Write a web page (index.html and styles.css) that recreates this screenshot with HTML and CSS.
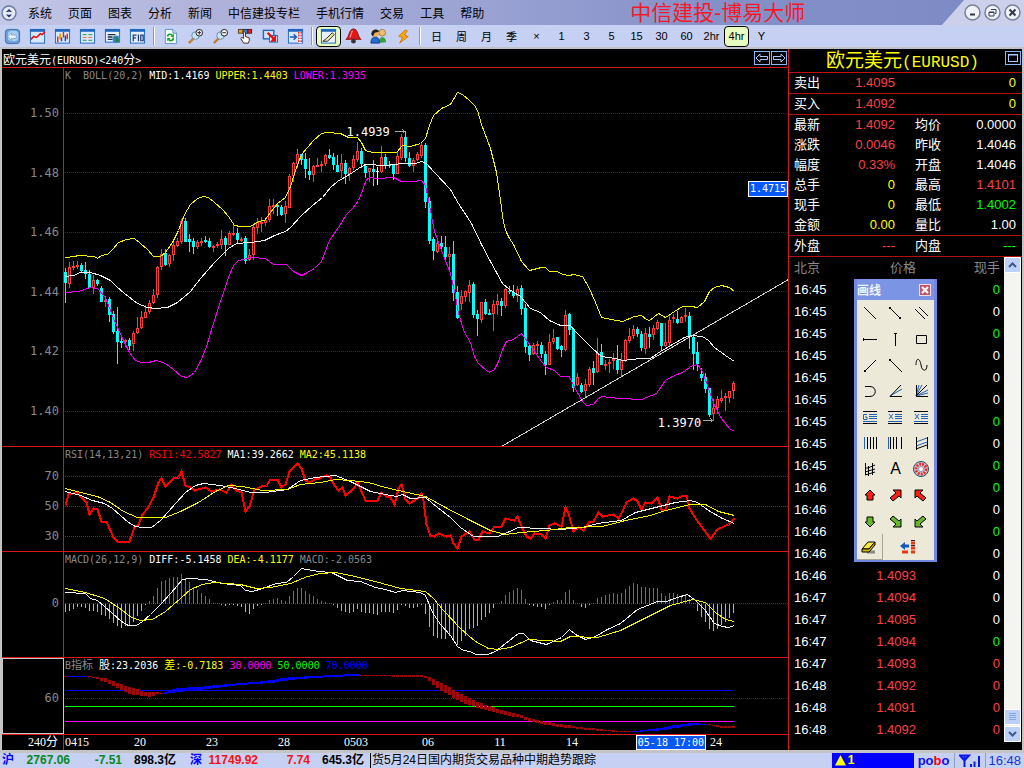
FILE: index.html
```html
<!DOCTYPE html>
<html lang="zh-CN">
<head>
<meta charset="utf-8">
<title>中信建投-博易大师</title>
<link rel="stylesheet" href="styles.css">
</head>
<body>
<header class="menubar">
  <svg class="app-icon" width="16" height="16" viewBox="0 0 16 16"><circle cx="8" cy="8" r="7" fill="#e4e8f4" stroke="#6878a0" stroke-width="1.4"/><path d="M5 7l3-3 3 3zM5 9.500l3 3 3-3z" fill="#203060"/><circle cx="8" cy="8.200" r="1.600" fill="#e4e8f4"/></svg>
  <nav class="menu">
    <button>系统</button><button>页面</button><button>图表</button><button>分析</button><button>新闻</button><button>中信建投专栏</button><button>手机行情</button><button>交易</button><button>工具</button><button>帮助</button>
  </nav>
  <h1 class="app-title">中信建投-博易大师</h1>
  <div class="window-buttons">
    <button aria-label="最小化"><svg width="17" height="17" viewBox="0 0 17 17"><circle cx="8.500" cy="8.500" r="7.500" fill="#f0f2f8" stroke="#788098" stroke-width="1.500"/><path d="M6 10.500h5" stroke="#303848" stroke-width="2"/></svg></button>
    <button aria-label="还原"><svg width="17" height="17" viewBox="0 0 17 17"><circle cx="8.500" cy="8.500" r="7.500" fill="#f0f2f8" stroke="#788098" stroke-width="1.500"/><path d="M7 5.500h5v4h-1M5 8h5v4H5zM5 8.500h5" fill="none" stroke="#304058"/></svg></button>
    <button aria-label="关闭"><svg width="17" height="17" viewBox="0 0 17 17"><circle cx="8.500" cy="8.500" r="7.500" fill="#f0f2f8" stroke="#788098" stroke-width="1.500"/><path d="M5.500 5.500l6 6M11.500 5.500l-6 6" stroke="#303848" stroke-width="2"/></svg></button>
  </div>
</header>

<div class="toolbar">
  <button aria-label="返回"><svg width="18" height="18" viewBox="0 0 18 18"><rect x="1.500" y="1.500" width="15" height="15" rx="3" fill="#6c9cd8" stroke="#4070a8"/><rect x="4" y="3" width="11" height="11" rx="4" fill="#a8cef0"/><path d="M4 9l4-4v2.500h5v3.500H8v2.500z" fill="#e8f4ff" stroke="#5888b8" stroke-width=".6"/></svg></button>
  <button aria-label="分时图"><svg width="18" height="18" viewBox="0 0 18 18"><rect x="1.500" y="2" width="15" height="14" fill="#d8e8fc" stroke="#2068c0"/><path d="M1 2.500h16" stroke="#2068c0" stroke-width="3"/><path d="M2 12l3-3 3 1 4-4 2 1 3-3" fill="none" stroke="#e01010" stroke-width="1.700"/></svg></button>
  <button aria-label="K线图"><svg width="18" height="18" viewBox="0 0 18 18"><rect x="1.500" y="2" width="15" height="14" fill="#d8e8fc" stroke="#2068c0"/><path d="M1 2.500h16" stroke="#2068c0" stroke-width="3"/><path d="M4 9v6M10 4v6M14 6v6" stroke="#e02010" stroke-width="1.500"/><path d="M6.500 6v6" stroke="#e0a000" stroke-width="2"/><path d="M12 8v6M8 10v4" stroke="#1048c0" stroke-width="1.500"/></svg></button>
  <button aria-label="报价"><svg width="18" height="18" viewBox="0 0 18 18"><rect x="1.500" y="2" width="15" height="14" fill="#dce8fc" stroke="#2068c0"/><path d="M1 2.500h16" stroke="#2068c0" stroke-width="3"/><path d="M4 7h4M10 7h4M4 13h4M10 13h4" stroke="#209040"/><path d="M4 10h4M10 10h4" stroke="#d87020"/></svg></button>
  <button aria-label="资讯"><svg width="18" height="18" viewBox="0 0 18 18"><rect x="1.500" y="2" width="15" height="13" fill="#e4eefc" stroke="#2068c0"/><path d="M1 2.500h16" stroke="#2068c0" stroke-width="3"/><path d="M4 7h8M4 9.500h5M4 12h5" stroke="#203050" stroke-width="1.500"/><circle cx="13" cy="12" r="4" fill="#3888c8"/><path d="M11 10l3 1-1 3 3-1" fill="none" stroke="#208030" stroke-width="1.500"/></svg></button>
  <button aria-label="F10"><svg width="18" height="18" viewBox="0 0 18 18"><rect x="1.500" y="2" width="15" height="14" fill="#e4eefc" stroke="#2068c0"/><path d="M1 2.500h16" stroke="#2068c0" stroke-width="3"/><path d="M4.500 14V7.500H8M4.500 10.500H7.500M10 7v7M12.500 7.500h2.500v6h-2.500z" fill="none" stroke="#203878" stroke-width="1.300"/></svg></button>
  <span class="sep"></span>
  <button aria-label="刷新"><svg width="18" height="18" viewBox="0 0 18 18"><path d="M3.500 1.500h8l4 4v11h-12z" fill="#f4fff4" stroke="#5890c8"/><path d="M11.500 1.500v4h4" fill="#c8dcf4" stroke="#5890c8"/><path d="M6 9c0-3 4-3 5-1M12 10c0 4-4 4-5 2" fill="none" stroke="#18a028" stroke-width="1.800"/><path d="M12.500 6v3.500H9zM5.500 14v-3.500H9z" fill="#18a028"/></svg></button>
  <button aria-label="放大"><svg width="18" height="18" viewBox="0 0 18 18"><path d="M2 16l5-5" stroke="#c08030" stroke-width="2.500"/><circle cx="9" cy="8" r="4" fill="#c8e4f8" stroke="#6888a8"/><circle cx="13" cy="5" r="3.500" fill="#f8f8ff" stroke="#181818"/><path d="M11 5h4M13 3v4" stroke="#181818"/></svg></button>
  <button aria-label="缩小"><svg width="18" height="18" viewBox="0 0 18 18"><path d="M2 16l5-5" stroke="#c08030" stroke-width="2.500"/><circle cx="9" cy="8" r="4" fill="#c8e4f8" stroke="#6888a8"/><circle cx="13" cy="5" r="3.500" fill="#f8f8ff" stroke="#181818"/><path d="M11 5h4" stroke="#181818"/></svg></button>
  <button aria-label="选择"><svg width="18" height="18" viewBox="0 0 18 18"><rect x="1.500" y="1.500" width="5" height="4" fill="#e8a020" stroke="#604020"/><rect x="6.500" y="1.500" width="5" height="4" fill="#3878d0" stroke="#203060"/><rect x="11.500" y="1.500" width="4" height="4" fill="#e02018" stroke="#601818"/><path d="M7 16l-3-5 1-1 2 1V5l1-1 1 1v4l4 1.500v3L12 16z" fill="#fff" stroke="#402818"/></svg></button>
  <button aria-label="转到"><svg width="18" height="18" viewBox="0 0 18 18"><rect x="1.500" y="2.500" width="11" height="9" fill="#d4e4fc" stroke="#2068c0" stroke-width="1.500"/><rect x="8" y="8" width="8.500" height="7" fill="#e8f0fc" stroke="#2068c0"/><path d="M6 5l6 6" stroke="#e01010" stroke-width="2.500"/><path d="M15 14.500H8.500L15 7z" fill="#e01010"/></svg></button>
  <button aria-label="侧栏"><svg width="18" height="18" viewBox="0 0 18 18"><rect x="1.500" y="2" width="15" height="14" fill="#dce8fc" stroke="#2068c0"/><path d="M1 2.500h16" stroke="#2068c0" stroke-width="3"/><rect x="12" y="4" width="4" height="12" fill="#fff"/><path d="M12.500 4v12M15 4v12" stroke="#e02020" stroke-width="1.500" stroke-dasharray="2 1"/><path d="M3 9.500h7M7 6.500l3 3-3 3" fill="none" stroke="#1858c0" stroke-width="1.500"/></svg></button>
  <span class="sep"></span>
  <button class="on" aria-label="画线"><svg width="18" height="18" viewBox="0 0 18 18"><rect x="1.500" y="2" width="15" height="14" fill="#e8f0fc" stroke="#2068c0"/><path d="M1 2.500h16" stroke="#2068c0" stroke-width="3"/><path d="M3 14h5l7-7-2-2-6 6z" fill="#f0e8b0" stroke="#202020"/></svg></button>
  <button aria-label="预警"><svg width="18" height="18" viewBox="0 0 18 18"><path d="M9 1c5 0 4 8 8 11H1C5 9 4 1 9 1z" fill="#e01818" stroke="#901010"/><path d="M8 3c-2 2-1 5-3 7" fill="none" stroke="#f88080" stroke-width="1.500"/><circle cx="9" cy="14" r="2.500" fill="#383838"/></svg></button>
  <button aria-label="用户"><svg width="18" height="18" viewBox="0 0 18 18"><path d="M9 16c0-8 8-8 8-1z" fill="#38a038"/><circle cx="13" cy="5" r="3.500" fill="#f0c070" stroke="#806020" stroke-width=".7"/><path d="M1 16c0-9 9-9 9 0z" fill="#2868d0" stroke="#103880"/><circle cx="5.500" cy="5.500" r="3.800" fill="#f0b050"/><path d="M1.500 7C1 1 9 0 9.500 4L5 5 3 9z" fill="#202020"/></svg></button>
  <button aria-label="闪电"><svg width="18" height="18" viewBox="0 0 18 18"><path d="M11 2L4 8.500l4 1.500-3 6 9-7-4-1.500 3-4.500z" fill="#f8a810" stroke="#d07808"/></svg></button>
  <span class="sep"></span>
  <button>日</button><button>周</button><button>月</button><button>季</button><button>×</button><button>1</button><button>3</button><button>5</button><button>15</button><button>30</button><button>60</button><button>2hr</button><button class="on">4hr</button><button>Y</button>
</div>

<main class="workspace">
  <section class="charts">
    <div class="chart-title"><span>欧元美元<span class="mono">(EURUSD)&lt;240</span>分<span class="mono">&gt;</span></span>
      <span class="arrows">
        <button aria-label="向左"><svg width="16" height="14" viewBox="0 0 16 14"><rect x=".5" y=".5" width="15" height="13" fill="none" stroke="#88b8f8"/><path d="M2 7l4-4v2.500h7.500v3H6V11z" fill="none" stroke="#a8ccff"/></svg></button>
        <button aria-label="向右"><svg width="16" height="14" viewBox="0 0 16 14"><rect x=".5" y=".5" width="15" height="13" fill="none" stroke="#88b8f8"/><path d="M14 7l-4-4v2.500H2.500v3H10V11z" fill="none" stroke="#a8ccff"/></svg></button>
      </span>
    </div>
    <div class="panel panel-k">
      <div class="axis"><span>1.50</span><span>1.48</span><span>1.46</span><span>1.44</span><span>1.42</span><span>1.40</span></div>
      <div class="plot">
        <svg id="kline" viewBox="64 68 724 378" preserveAspectRatio="none"></svg>
        <div class="legend"><span class="dim">K&nbsp; BOLL(20,2)</span><span>MID:1.4169</span><span class="yellow">UPPER:1.4403</span><span class="magenta">LOWER:1.3935</span></div>
        <span class="mark mark-high">1.4939</span>
        <span class="mark mark-low">1.3970</span>
        <span class="price-tag">1.4715</span>
      </div>
    </div>
    <div class="panel panel-rsi">
      <div class="axis"><span>70</span><span>50</span><span>30</span></div>
      <div class="plot">
        <svg id="rsi" viewBox="64 447 724 104" preserveAspectRatio="none"></svg>
        <div class="legend"><span class="dim">RSI(14,13,21)</span><span class="red">RSI1:42.5827</span><span>MA1:39.2662</span><span class="yellow">MA2:45.1138</span></div>
      </div>
    </div>
    <div class="panel panel-macd">
      <div class="axis"><span>0</span></div>
      <div class="plot">
        <svg id="macd" viewBox="64 552 724 105" preserveAspectRatio="none"></svg>
        <div class="legend"><span class="dim">MACD(26,12,9)</span><span>DIFF:-5.1458</span><span class="yellow">DEA:-4.1177</span><span class="dim">MACD:-2.0563</span></div>
      </div>
    </div>
    <div class="panel panel-b">
      <div class="axis"><span>60</span></div>
      <div class="plot">
        <svg id="bind" viewBox="64 658 724 76" preserveAspectRatio="none"></svg>
        <div class="legend"><span class="dim">B<i class="cjk">指标</i></span><span><i class="cjk">股</i>:23.2036</span><span class="yellow"><i class="cjk">差</i>:-0.7183</span><span class="magenta">30.0000</span><span class="green">50.0000</span><span class="blue">70.0000</span></div>
      </div>
    </div>
    <div class="timeline">
      <div class="period">240分</div>
      <div class="dates"><span class="first">0415</span><span>20</span><span>23</span><span>28</span><span>0503</span><span>06</span><span>11</span><span>14</span><span></span><span>24</span><b class="cursor-date">05-18 17:00</b></div>
    </div>
  </section>

  <aside class="side">
    <div class="symbol"><h2>欧元美元<span>(EURUSD)</span></h2>
      <button aria-label="最大化"><svg width="16" height="14" viewBox="0 0 16 14"><rect x=".5" y=".5" width="15" height="13" fill="none" stroke="#88b8f8"/><rect x="3.500" y="3.500" width="9" height="7" fill="none" stroke="#a8ccff"/><path d="M3 4h10" stroke="#a8ccff"/></svg></button>
    </div>
    <table class="quote">
      <colgroup><col class="c1"><col class="c2"><col class="c3"><col></colgroup>
      <tbody>
      <tr class="rule"><th>卖出</th><td class="up">1.4095</td><th></th><td class="yellow">0</td></tr>
      <tr class="rule"><th>买入</th><td class="up">1.4092</td><th></th><td class="yellow">0</td></tr>
      <tr><th>最新</th><td class="up">1.4092</td><th>均价</th><td>0.0000</td></tr>
      <tr><th>涨跌</th><td class="up">0.0046</td><th>昨收</th><td>1.4046</td></tr>
      <tr><th>幅度</th><td class="up">0.33%</td><th>开盘</th><td>1.4046</td></tr>
      <tr><th>总手</th><td class="yellow">0</td><th>最高</th><td class="up">1.4101</td></tr>
      <tr><th>现手</th><td class="yellow">0</td><th>最低</th><td class="green">1.4002</td></tr>
      <tr class="rule"><th>金额</th><td class="yellow">0.00</td><th>量比</th><td>1.00</td></tr>
      <tr class="rule"><th>外盘</th><td class="up">---</td><th>内盘</th><td class="green">---</td></tr>
      </tbody>
    </table>
    <div class="tick-area">
      <table class="ticks">
        <thead><tr><th>北京</th><th>价格</th><th>现手</th></tr></thead>
        <tbody>
        <tr><td>16:45</td><td></td><td class="green">0</td></tr>
        <tr><td>16:45</td><td></td><td>0</td></tr>
        <tr><td>16:45</td><td></td><td class="green">0</td></tr>
        <tr><td>16:45</td><td></td><td>0</td></tr>
        <tr><td>16:45</td><td></td><td>0</td></tr>
        <tr><td>16:45</td><td></td><td>0</td></tr>
        <tr><td>16:45</td><td></td><td class="green">0</td></tr>
        <tr><td>16:45</td><td></td><td>0</td></tr>
        <tr><td>16:45</td><td></td><td class="green">0</td></tr>
        <tr><td>16:46</td><td></td><td class="green">0</td></tr>
        <tr><td>16:46</td><td></td><td>0</td></tr>
        <tr><td>16:46</td><td></td><td class="green">0</td></tr>
        <tr><td>16:46</td><td></td><td>0</td></tr>
        <tr><td>16:46</td><td>1.4093</td><td>0</td></tr>
        <tr><td>16:47</td><td>1.4094</td><td>0</td></tr>
        <tr><td>16:47</td><td>1.4095</td><td>0</td></tr>
        <tr><td>16:47</td><td>1.4094</td><td class="green">0</td></tr>
        <tr><td>16:47</td><td>1.4093</td><td class="up">0</td></tr>
        <tr><td>16:48</td><td>1.4092</td><td class="up">0</td></tr>
        <tr><td>16:48</td><td>1.4091</td><td class="up">0</td></tr>
        <tr><td>16:48</td><td>1.4092</td><td class="up">0</td></tr>
        </tbody>
      </table>
      <div class="scrollbar">
        <button aria-label="向上滚动"><svg width="9" height="6" viewBox="0 0 9 6"><path d="M1 5l3.500-3.500L8 5" fill="none" stroke="#405888" stroke-width="2"/></svg></button>
        <span class="track"></span>
        <button class="thumb" aria-label="滚动块"><svg width="8" height="8" viewBox="0 0 8 8"><path d="M0 .5h7M0 2.500h7M0 4.500h7M0 6.500h7" stroke="#88a8e0"/></svg></button>
        <button aria-label="向下滚动"><svg width="9" height="6" viewBox="0 0 9 6"><path d="M1 1l3.500 3.500L8 1" fill="none" stroke="#405888" stroke-width="2"/></svg></button>
      </div>
    </div>
  </aside>
</main>

<footer class="statusbar">
  <b class="market">沪</b><b class="num down w56">2767.06</b><b class="num down w52">-7.51</b><b class="num w54">898.3亿</b>
  <b class="market sz">深</b><b class="num rise w56">11749.92</b><b class="num rise w52">7.74</b><b class="num w54">645.3亿</b>
  <span class="ticker">货5月24日国内期货交易品种中期趋势跟踪</span>
  <span class="alert"><svg width="11" height="11" viewBox="0 0 11 11"><path d="M5.500 0L11 10.500H0z" fill="#ff0"/></svg>1</span>
  <b class="brand">po<em>b</em>o</b>
  <span class="signal"><svg width="22" height="13" viewBox="0 0 22 13"><path d="M1 1.500h9L5.500 6.500zM5.500 2v11M12 10v3M15.500 7.500V13M20 2v11" fill="none" stroke="#0818f0" stroke-width="2"/></svg></span>
  <span class="clock">16:48</span>
</footer>

<div class="palette">
  <div class="palette-title"><span>画线</span><button aria-label="关闭画线"><svg width="12" height="12" viewBox="0 0 12 12"><rect x=".5" y=".5" width="11" height="11" fill="#c05868" stroke="#f0d8e0"/><path d="M3 3l6 6M9 3l-6 6" stroke="#fff" stroke-width="2"/></svg></button></div>
  <div class="tools">
    <button aria-label="直线"><svg viewBox="0 0 18 18"><path d="M3 3l12 12"/></svg></button>
    <button aria-label="线段"><svg viewBox="0 0 18 18"><path d="M4 4l10 10"/><path d="M3 3h2v2H3zM13 13h2v2h-2z" class="fill"/></svg></button>
    <button aria-label="平行线"><svg viewBox="0 0 18 18"><path d="M3 5l10 10M7 3l9 9"/></svg></button>
    <button aria-label="水平线"><svg viewBox="0 0 18 18"><path d="M2 9.500h14M2.500 8v3"/></svg></button>
    <button aria-label="垂直线"><svg viewBox="0 0 18 18"><path d="M9.500 3v13M8 3.500h3"/></svg></button>
    <button aria-label="矩形"><svg viewBox="0 0 18 18"><path d="M4.500 5.500h10v8h-10z"/></svg></button>
    <button aria-label="射线"><svg viewBox="0 0 18 18"><path d="M4 15L15 4"/><path d="M3 14h2v2H3z" class="fill"/></svg></button>
    <button aria-label="下射线"><svg viewBox="0 0 18 18"><path d="M4 4l12 12"/><path d="M3 3h2v2H3z" class="fill"/></svg></button>
    <button aria-label="正弦线"><svg viewBox="0 0 18 18"><path d="M4 9C4 1 8 2 9 9s6 7 6 0"/></svg></button>
    <button aria-label="圆弧"><svg viewBox="0 0 18 18"><path d="M4 4.500h5c7 0 7 10 0 10H4"/></svg></button>
    <button aria-label="角度线"><svg viewBox="0 0 18 18"><path class="b" d="M4 14l12-7"/><path d="M15 3L4 14.500h12"/></svg></button>
    <button aria-label="江恩扇"><svg viewBox="0 0 18 18"><path class="b" d="M4 14L7 3M4 14l6-11M4 14l12-6M4 14l12-3"/><path d="M4.500 3v11.500H16M4 14L15 3"/></svg></button>
    <button aria-label="黄金分割"><svg viewBox="0 0 18 18"><path class="b" d="M6 6.500H2.500v5H6V9H4M8 6.500h8M8 8.500h8M8 10.500h8M2 13.500h14"/><path d="M2 3.500h14M2 15.500h14"/></svg></button>
    <button aria-label="百分比线"><svg viewBox="0 0 18 18"><path class="b" d="M3 6l4 5M7 6l-4 5M9 6.500h7M9 8.500h7M9 10.500h7M2 13.500h14"/><path d="M2 3.500h14M2 15.500h14"/></svg></button>
    <button aria-label="波段线"><svg viewBox="0 0 18 18"><path class="b" d="M3 6l4 5M7 6l-4 5M9 6.500h7M9 8.500h7M9 10.500h7M2 13.500h14"/><path d="M2 3.500h14M2 15.500h14"/></svg></button>
    <button aria-label="周期线"><svg viewBox="0 0 18 18"><path class="b" d="M3.500 3v12"/><path d="M6.500 3v12M9.500 3v12M12.500 3v12M15.500 3v12"/></svg></button>
    <button aria-label="斐波那契线"><svg viewBox="0 0 18 18"><path class="b" d="M2.500 3v12"/><path d="M4.500 3v12M7.500 3v12M10.500 3v12M15.500 3v12"/></svg></button>
    <button aria-label="通道"><svg viewBox="0 0 18 18"><path class="b" d="M4 8l11-4M4 12l11-4"/><path d="M4.500 3v13M15.500 3v12M4 15l11-4"/></svg></button>
    <button aria-label="回归线"><svg viewBox="0 0 18 18"><path d="M4.500 3v12M7.500 6v10M11.500 3v12M4 8h3l7-3M4 12l10-3M4 15l10-3"/></svg></button>
    <button aria-label="文字" class="letter">A</button>
    <button aria-label="图案"><svg viewBox="0 0 18 18"><circle cx="9" cy="9" r="7.500" fill="#d0d4dc" stroke="#284868"/><circle cx="9" cy="9" r="5" stroke="#e83030" stroke-width="3" stroke-dasharray="2 1"/><circle cx="9" cy="9" r="2.500" fill="#fff" stroke="#8090b0"/></svg></button>
    <button aria-label="红上箭头"><svg viewBox="0 0 18 18"><path class="r" d="M9 4l5 5h-2v5H6V9H4z"/></svg></button>
    <button aria-label="红右上箭头"><svg viewBox="0 0 18 18"><path class="r" d="M7 4h8v8l-2-2-6 5-3-3 6-5z"/></svg></button>
    <button aria-label="红左上箭头"><svg viewBox="0 0 18 18"><path class="r" d="M11 4H3v8l2-2 6 5 3-3-6-5z"/></svg></button>
    <button aria-label="绿下箭头"><svg viewBox="0 0 18 18"><path class="g" d="M9 15l5-5h-2V5H6v5H4z"/></svg></button>
    <button aria-label="绿右下箭头"><svg viewBox="0 0 18 18"><path class="g" d="M7 15h8V7l-2 2-6-5-3 3 6 5z"/></svg></button>
    <button aria-label="绿左下箭头"><svg viewBox="0 0 18 18"><path class="g" d="M11 15H3V7l2 2 6-5 3 3-6 5z"/></svg></button>
    <button aria-label="橡皮" class="raised"><svg viewBox="0 0 18 18"><path d="M7 14h8" stroke="#888" stroke-width="3"/><path d="M8 4h7l-6 7H2z" fill="#ffe838"/><path d="M2 11h7l6-7v3l-6 7H2z" fill="#d8b800"/></svg></button>
    <button aria-label="收起" class="wide"><svg viewBox="0 0 18 18"><path d="M1 8l5-4v2.500h4v3H6V12z" fill="#1858b8" stroke="none"/><path d="M12 5h4M12 10h4M3 14h6M12 14h4" stroke="#e83818" stroke-width="3"/><path d="M12 2.500h4M12 7.500h4" stroke="#202020"/></svg></button>
  </div>
</div>
<script src="charts.js"></script>
</body>
</html>
```
FILE: styles.css
```css
* { box-sizing: border-box; }
body {
  margin: 0;
  height: 100vh;
  display: flex;
  flex-direction: column;
  position: relative;
  overflow: hidden;
  background: #c4c4c4;
  color: #fff;
  font-family: "Liberation Sans", "Noto Sans CJK SC", sans-serif;
  font-size: 12px;
}
button {
  margin: 0;
  padding: 0;
  border: 0;
  background: none;
  color: inherit;
  font: inherit;
  display: flex;
  align-items: center;
  justify-content: center;
}
svg { display: block; }

.menubar {
  flex: none;
  height: 25px;
  display: flex;
  align-items: center;
  color: #000;
  background: linear-gradient(90deg, #c4c8e8 0, #b0b2da 20%, #9ca4d4 45%, #8490c8 70%, #7c8ac4 100%);
}
.app-icon { margin-left: 1px; }
.menu { display: flex; margin-left: 3px; }
.menu button { padding: 0 8px; height: 25px; white-space: nowrap; }
.app-title {
  flex: 1;
  margin: 0;
  padding-left: 138px;
  color: #f81828;
  font-size: 21px;
  line-height: 24px;
  font-weight: 400;
  white-space: nowrap;
}
.window-buttons {
  flex: none;
  width: 82px;
  height: 25px;
  display: flex;
  align-items: center;
  justify-content: flex-end;
  gap: 3px;
  padding-right: 3px;
  background: #ccd0ea;
  clip-path: polygon(22px 0, 100% 0, 100% 100%, 0 100%);
}

.toolbar {
  flex: none;
  height: 24px;
  display: flex;
  align-items: center;
  color: #000;
  background: #c6d0f2;
  border-bottom: 2px solid #c0c0c8;
}
.toolbar button { width: 25px; height: 21px; font-size: 11px; }
.toolbar svg { width: 17px; height: 17px; }
.toolbar .on { border: 1px solid #000; border-radius: 4px; background: #e8fcc0; }
.toolbar .sep { width: 8px; height: 18px; background: linear-gradient(90deg, transparent 3px, #9098b0 3px 4px, #fff 4px 5px, transparent 5px); }

.workspace {
  flex: 1;
  min-height: 0;
  display: flex;
  margin: 0 2px;
  background: #000;
}
.charts { flex: 1; min-width: 0; display: flex; flex-direction: column; border-right: 1px solid #d81818; }
.chart-title {
  flex: none;
  height: 19px;
  display: flex;
  justify-content: space-between;
  align-items: center;
  padding: 0 1px;
  border-bottom: 1px solid #d81818;
}
.mono { font-family: "DejaVu Sans Mono", "Noto Sans CJK SC", monospace; font-size: 10px; }
.arrows { display: flex; gap: 1px; }
.panel { min-height: 0; display: flex; border-bottom: 1px solid #d81818; }
.panel-k { flex: 378 1 0; }
.panel-rsi { flex: 104 1 0; }
.panel-macd { flex: 105 1 0; }
.panel-b { flex: 76 1 0; }
.axis {
  flex: none;
  width: 62px;
  display: flex;
  flex-direction: column;
  justify-content: space-between;
  padding-right: 4px;
  border-right: 1px solid #d81818;
  color: #888;
  text-align: right;
  font-family: "DejaVu Sans Mono", monospace;
  font-size: 12px;
  line-height: 14px;
}
.panel-k .axis { padding-top: 38px; padding-bottom: 28px; }
.panel-rsi .axis { padding-top: 22px; padding-bottom: 8px; }
.panel-macd .axis { padding-top: 44px; }
.panel-b .axis { padding-top: 32px; border: 1px solid #c8c8c8; }
.plot { flex: 1; min-width: 0; display: grid; grid-template-rows: minmax(0, 1fr); position: relative; }
.plot svg { grid-area: 1 / 1; width: 100%; height: 100%; min-height: 0; }
.legend {
  grid-area: 1 / 1;
  align-self: start;
  display: flex;
  gap: 6px;
  padding-left: 1px;
  line-height: 16px;
  font-family: "DejaVu Sans Mono", "Noto Sans CJK SC", monospace;
  font-size: 10px;
  white-space: nowrap;
}
.cjk { font-style: normal; font-size: 11px; }
.dim { color: #888; }
.red { color: #f00; }
.up { color: #ff4040; }
.yellow { color: #ff0; }
.magenta { color: #f0f; }
.green { color: #0f0; }
.blue { color: #00f; }
.mark, .price-tag { position: absolute; font-family: "DejaVu Sans Mono", monospace; line-height: 14px; }
.mark { font-size: 12px; }
.mark-high { right: 55%; top: 15%; }
.mark-low { right: 12%; top: 92%; }
.price-tag { right: 0; top: 30%; width: 40px; height: 16px; border: 1px solid #fff; background: #0858f8; font-size: 10px; text-align: center; }

.timeline { flex: none; height: 15px; display: flex; line-height: 15px; font-family: "Liberation Serif", "Noto Sans CJK SC", serif; }
.period { flex: none; width: 62px; padding-right: 5px; border-right: 1px solid #d81818; text-align: right; }
.dates { flex: 1; position: relative; display: grid; grid-template-columns: 40fr repeat(9, 72fr) 36fr; text-align: center; }
.dates .first { text-align: left; padding-left: 1px; }
.cursor-date {
  position: absolute;
  left: 79%;
  top: 0;
  width: 70px;
  height: 15px;
  line-height: 13px;
  border: 1px solid #fff;
  background: #0858f8;
  font-family: "DejaVu Sans Mono", monospace;
  font-size: 10px;
  font-weight: 400;
  white-space: nowrap;
}

.side { flex: none; width: 233px; display: flex; flex-direction: column; font-size: 13px; }
.symbol { flex: none; height: 24px; display: flex; justify-content: space-between; border-bottom: 1px solid #c01010; }
.symbol h2 { flex: 1; margin: 0; padding-left: 12px; text-align: center; color: #ff0; font-size: 19px; line-height: 23px; font-weight: 400; white-space: nowrap; }
.symbol h2 span { font-family: "Liberation Mono", monospace; font-size: 16px; }
.symbol button { width: 18px; height: 18px; }
.quote, .ticks { border-collapse: separate; border-spacing: 0; table-layout: fixed; }
.quote { width: 100%; line-height: 20px; }
.quote th, .quote td { height: 20px; padding: 0; font-weight: 400; }
.quote th { text-align: left; padding-left: 5px; }
.quote td { text-align: right; }
.quote td:last-child { padding-right: 6px; }
.quote .c1 { width: 50px; }
.quote .c2 { width: 56px; }
.quote .c3 { width: 55px; }
.quote th:nth-child(3) { padding-left: 20px; }
.quote .rule > * { border-bottom: 1px solid #b01010; }
.tick-area { flex: 1; min-height: 0; display: flex; justify-content: space-between; padding-right: 1px; padding-bottom: 8px; }
.ticks { align-self: flex-start; width: 211px; line-height: 22px; }
.ticks th { height: 22px; padding: 0; font-weight: 400; color: #888; text-align: right; }
.ticks th:first-child { width: 60px; text-align: left; padding-left: 5px; }
.ticks th:nth-child(2) { width: 67px; }
.ticks td { height: 22px; padding: 0; text-align: right; }
.ticks td:first-child { text-align: left; padding-left: 5px; }
.ticks td:nth-child(2) { color: #ff4040; }
.scrollbar { width: 17px; display: flex; flex-direction: column; gap: 1px; background: #f4f4f0; }
.scrollbar button { height: 16px; border: 1px solid #fff; border-radius: 2px; background: #bcd0fa; }
.track { flex: 1; }

.statusbar {
  flex: none;
  height: 18px;
  display: flex;
  align-items: center;
  color: #000;
  background: #c6d0f2;
  border-top: 3px solid #c4c4c4;
  line-height: 15px;
  white-space: nowrap;
}
.market { width: 13px; margin-left: 2px; color: #00f; }
.sz { margin-left: 14px; }
.num { text-align: right; }
.w56 { width: 55px; }
.w52 { width: 52px; }
.w54 { width: 54px; }
.down { color: #088820; }
.rise { color: #f81010; }
.ticker { flex: 1; margin-left: 6px; padding-left: 1px; border-left: 1px solid #000; }
.alert { display: flex; align-items: center; gap: 2px; width: 82px; padding-left: 3px; background: #00f; color: #ff0; font-weight: 700; }
.brand { padding: 0 5px 0 4px; color: #1010f0; font-size: 13px; border-right: 1px solid #90a0c0; }
.brand em { color: #f00; font-style: normal; }
.signal { padding: 1px 4px; border-right: 1px solid #90a0c0; }
.clock { padding: 0 3px 0 2px; color: #1038d0; font-size: 13px; }

/* floating drawing palette */
.palette {
  position: absolute;
  right: 87px;
  top: 279px;
  width: 83px;
  border: 3px solid #7088e0;
  border-top-width: 0;
  border-bottom-width: 2px;
  background: #ece9d8;
  color: #000;
}
.palette-title {
  height: 21px;
  display: flex;
  align-items: center;
  justify-content: space-between;
  padding-right: 3px;
  color: #f0f4ff;
  font-weight: 700;
  background: #7c94e4;
}
.tools { display: grid; grid-template-columns: repeat(3, 1fr); grid-auto-rows: 26px; }
.tools svg { width: 18px; height: 18px; fill: none; stroke: #000; }
.tools .fill { fill: #000; stroke: none; }
.tools .b { stroke: #2060b8; }
.tools .r { fill: #f82010; }
.tools .g { fill: #68b828; }
.tools .letter { font-size: 16px; }
.tools .wide { grid-column: span 2; }
.tools .raised { border-right: 1px solid #a8a498; border-bottom: 1px solid #a8a498; }
```
FILE: charts.js
```js
// Each candle: wick top, body top, body bottom, wick bottom, then u / d / n.
const candles = `268 272 283 303 d|262 267 284 288 u|261 266 267 270 u|261 265 266 269 u|263 265 271 273 d|262 270 274 279 d|270 274 288 288 d|275 280 288 294 u|279 280 284 286 d|286 288 302 302 d|296 300 302 307 u|297 299 315 322 d|311 314 332 334 d|307 331 342 364 d|338 341 343 348 d|339 340 341 347 u|338 340 346 350 d|331 333 344 351 u|317 328 333 334 u|311 317 328 329 u|305 312 318 318 u|300 303 312 314 u|289 295 303 304 u|266 267 295 298 u|249 254 267 270 u|249 253 265 266 d|254 255 264 267 u|241 245 255 261 u|238 241 246 247 u|219 221 242 244 u|218 221 242 242 d|234 239 242 252 d|238 241 247 254 d|240 242 247 249 u|238 241 242 246 u|236 240 242 243 d|238 241 247 248 d|245 246 247 252 u|242 244 246 248 u|230 239 245 249 u|236 238 245 256 d|231 233 245 245 u|225 233 234 236 u|228 233 240 243 d|237 239 241 242 u|236 238 261 264 d|249 255 260 261 u|224 227 255 260 u|218 222 228 234 u|217 222 224 232 u|218 220 223 226 u|199 206 220 222 u|199 205 207 214 u|204 205 207 216 d|205 207 215 216 d|201 206 214 223 u|174 176 208 208 u|162 163 176 182 u|149 154 164 168 u|154 154 160 165 d|153 159 169 178 d|158 171 175 180 d|165 166 175 182 u|158 165 166 167 u|161 164 166 172 u|154 155 164 166 u|149 155 158 159 d|153 157 165 170 d|155 165 172 172 d|154 163 171 178 u|160 163 174 184 d|167 168 174 181 u|155 159 168 170 u|142 151 160 162 u|148 151 164 168 d|165 166 173 178 d|168 168 172 182 u|160 169 172 186 d|167 171 172 185 n|146 157 172 173 u|154 157 165 169 d|161 165 166 168 d|164 165 174 180 d|152 156 174 174 u|134 137 158 160 u|131 137 158 162 d|152 158 166 167 d|158 160 166 172 u|152 154 160 161 u|142 145 156 158 u|143 145 202 208 d|197 201 241 244 d|237 239 251 260 d|241 243 252 253 u|236 243 247 249 d|236 247 257 260 d|247 254 257 272 u|241 254 293 301 d|286 292 318 319 d|290 296 304 310 u|290 291 297 302 u|280 285 293 302 u|282 284 315 318 d|310 314 319 336 d|302 302 320 323 u|299 302 314 315 d|309 313 315 315 d|300 304 314 331 u|294 301 305 315 u|298 301 306 316 d|288 289 306 308 u|286 291 292 294 d|285 292 296 298 d|286 289 296 302 u|285 288 309 315 d|304 308 347 353 d|345 346 355 361 d|343 345 354 355 u|341 344 346 354 u|342 345 354 358 d|351 354 365 375 d|334 342 365 365 u|329 338 342 344 u|337 337 349 350 d|345 346 350 357 d|310 315 350 351 u|313 314 330 335 d|328 329 388 392 d|373 377 385 386 u|383 385 392 393 d|379 384 391 397 u|367 369 385 387 u|361 368 373 385 d|338 353 372 373 u|344 352 365 365 d|360 364 365 370 u|359 362 364 373 u|353 359 360 369 u|345 360 370 374 d|353 360 370 376 u|339 340 361 362 u|328 336 341 343 u|325 329 336 339 u|327 329 334 337 d|331 334 348 351 d|328 333 349 354 u|327 334 337 348 d|325 328 335 340 u|320 322 329 330 u|323 323 346 350 d|323 342 346 347 u|314 320 343 347 u|314 317 319 323 u|311 319 323 324 d|316 317 323 323 u|308 315 317 322 u|312 316 337 349 d|336 337 354 370 d|342 352 364 371 d|368 374 378 381 d|373 377 389 393 d|388 388 415 417 d|399 408 414 421 u|396 399 408 414 u|390 398 401 403 u|393 396 397 411 u|391 391 398 403 u|381 383 391 399 u`.split('|').map(s => s.split(' '));

const upper = '65,257 74,256 78,255 94,256 97,258 101,255 107,254 112,249 118,242 126,239 134,238 140,243 147,249 153,256 160,256 165,252 172,242 178,230 184,214 190,204 197,198 203,196 208,197 214,202 222,209 228,216 234,225 240,226 250,226 258,221 264,220 270,212 277,203 285,197 290,186 295,170 301,154 307,147 313,140 321,133 326,132 340,133 348,137 357,137 361,142 365,150 372,152 396,152 402,145 410,146 420,143 425,138 429,125 433,115 441,108 450,104 457,92 462,94 469,100 474,105 477,110 481,124 490,148 496,172 500,200 503,222 506,232 509,238 513,244 521,261 529,270 541,267 545,267 549,271 557,271 562,274 569,275 573,274 582,276 588,286 595,302 601,317 611,319 622,321 634,316 641,315 646,319 649,320 658,313 665,317 674,311 682,306 691,306 697,307 704,301 709,291 714,287 721,285 729,287 734,291';
const mid = '65,276 73,275 80,272 90,272 100,275 110,280 116,286 124,293 137,303 147,307 155,308 167,307 177,302 190,291 200,278 214,262 228,248 236,243 250,242 264,240 274,235 285,231 290,227 300,216 312,205 322,197 330,187 337,181 349,174 358,168 365,164 385,165 402,163 415,163 421,161 426,163 434,172 450,189 458,203 471,223 481,244 490,261 502,283 509,289 520,296 530,308 540,312 549,320 560,325 570,325 574,330 582,338 592,348 601,356 615,358 622,360 640,358 650,358 660,351 672,344 684,337 691,335 702,336 708,340 714,347 725,355 734,361';
const lower = '65,292 78,291 90,287 97,288 105,297 113,318 122,338 129,352 135,360 141,362 148,362 156,360 165,363 173,369 181,376 187,377 194,372 200,361 206,346 212,326 220,301 228,277 233,265 238,260 251,257 265,258 273,264 286,264 293,271 301,275 307,272 314,268 321,261 329,240 338,227 346,214 352,208 358,200 362,190 366,179 370,177 376,178 393,177 401,181 413,181 421,180 425,185 429,205 434,231 441,250 450,273 455,295 458,313 464,332 470,342 474,356 478,363 486,370 489,372 494,369 498,361 502,349 506,341 513,339 521,333 530,345 541,361 546,367 554,370 560,376 569,376 573,385 582,401 586,405 593,404 597,399 601,396 619,398 641,399 656,393 665,380 672,376 684,371 690,366 697,364 702,371 708,388 714,405 721,418 729,428 734,431';

const rsi = '65,505 68,494 77,492 81,497 86,502 89,514 93,508 97,509 101,521 106,521 113,537 117,541 129,541 134,527 138,524 142,514 147,508 153,497 158,482 161,478 165,486 173,478 178,477 181,471 185,485 190,487 194,490 205,487 211,491 219,489 226,492 231,484 236,490 241,492 245,511 249,506 254,489 261,486 266,485 270,479 277,479 281,487 285,484 289,471 297,463 301,468 305,480 309,482 314,479 319,478 326,475 330,477 334,485 338,490 342,487 345,495 349,492 354,487 357,482 361,491 365,500 377,500 381,492 386,496 390,497 394,504 398,488 401,484 405,499 409,503 417,498 421,493 423,500 426,524 430,535 434,536 438,533 446,536 450,535 453,543 457,548 461,536 469,531 474,539 478,539 482,531 489,533 494,526 501,526 505,518 514,520 517,516 522,528 526,536 530,538 534,533 541,534 545,538 549,525 554,523 561,526 565,507 568,513 573,531 578,527 583,530 589,521 593,521 598,512 602,516 613,514 618,518 622,511 626,502 633,498 637,501 641,509 645,502 651,503 657,497 661,509 665,509 669,496 677,498 682,495 686,495 689,508 696,519 706,533 710,538 717,529 728,524 734,518';
const ma1 = '65,491 80,495 92,500 104,503 112,508 128,522 135,526 142,527 151,527 160,520 175,503 185,492 195,485 203,483 220,485 235,488 250,492 265,492 287,489 300,480 315,477 335,475 350,481 370,491 385,494 396,496 402,494 410,498 425,497 437,507 450,517 460,527 473,536 497,536 507,532 518,527 540,528 560,529 582,527 597,523 621,520 635,512 655,507 675,502 690,500 697,502 708,510 722,518 734,523';
const ma2 = '65,488 80,492 97,496 110,502 123,511 137,517 165,517 180,511 198,502 215,491 228,485 242,486 262,490 287,489 300,484 320,482 335,479 350,480 368,482 385,487 398,490 425,496 445,507 470,520 490,530 505,534 520,532 545,530 570,527 602,526 625,520 650,515 665,510 690,504 705,504 718,511 734,515';

const diff = '65,592 85,593 90,598 97,600 104,606 112,613 121,621 128,625 136,625 142,621 150,614 160,604 170,593 177,585 182,579 190,578 205,579 222,583 240,585 245,590 252,591 262,588 276,583 286,582 293,576 301,568 318,571 331,572 347,580 360,581 375,587 385,589 395,592 402,590 420,592 425,595 432,612 440,624 450,635 457,646 463,650 470,651 475,654 487,654 495,651 505,643 518,633 523,633 530,640 546,644 561,637 569,629 575,634 585,639 595,636 607,629 620,623 637,609 657,601 666,601 677,597 687,594 695,600 704,609 714,623 722,626 728,627 734,625';
const dea = '65,588 85,592 104,598 118,607 131,617 140,620 152,619 165,611 180,598 190,589 202,584 214,582 240,584 256,588 270,587 290,583 307,576 320,573 335,572 350,575 375,581 400,588 425,591 433,598 443,610 460,628 475,641 488,648 498,649 510,647 528,639 560,641 570,636 597,637 620,630 650,615 670,605 692,599 705,602 715,612 725,619 734,621';
const hist = [-8,-7,-5,-3,-3,-4,-7,-7,-8,-11,-12,-15,-19,-22,-24,-22,-21,-18,-12,-7,-1,3,8,16,23,24,26,27,27,30,26,22,17,14,11,8,5,1,1,-1,-2,-1,-1,-2,-3,-8,-10,-5,-2,-1,1,4,5,6,4,3,8,13,16,16,13,10,8,5,3,2,1,-1,-4,-7,-8,-9,-8,-5,-8,-9,-9,-10,-11,-8,-8,-8,-9,-6,-1,-2,-4,-4,-3,-1,-10,-23,-32,-34,-35,-35,-32,-35,-41,-37,-32,-25,-24,-22,-16,-13,-9,-4,0,3,9,12,14,16,14,5,-1,-2,-3,-3,-5,-1,2,4,4,12,14,4,1,-3,-4,-1,1,6,7,9,10,11,10,11,15,18,21,20,17,17,16,16,16,11,8,11,11,10,9,10,5,1,-7,-13,-18,-25,-27,-25,-21,-18,-14,-9];

// Band knots of the B indicator: x, top, bottom.
const band = [[65,676,677],[89,676,677],[97,677,679],[105,678,682],[113,681,686],[121,684,690],[129,687,694],[137,689,695],[145,692,696],[152,692,697],[157,692,694],[161,693,694],[165,692,694],[177,688,692],[197,687,690],[217,685,688],[240,683,685],[257,682,684],[270,680,683],[290,677,680],[313,676,678],[330,675,677],[357,674,676],[361,675,676],[423,675,677],[429,677,681],[437,681,688],[445,685,693],[455,691,699],[465,696,704],[475,701,707],[485,705,710],[495,708,713],[505,711,715],[520,715,718],[540,721,724],[560,724,727],[580,727,729],[600,729,731],[620,731,732],[635,731,732],[650,729,731],[665,727,730],[680,724,727],[697,723,725],[705,724,725],[709,724,725],[720,726,728],[736,726,728]];

const line = (pts, color, w = 1) => `<polyline points="${pts}" transform="translate(.5 .5)" fill="none" stroke="${color}" stroke-width="${w}"/>`;
const level = (y, color = '#b01010', x2 = 788, dash = '1 1') => `<path d="M65 ${y}.5H${x2}" stroke="${color}" stroke-dasharray="${dash}"/>`;
const draw = (id, parts) => { document.getElementById(id).innerHTML = `<g shape-rendering="crispEdges">${parts.join('')}</g>`; };
const colors = { u: '#ff3c38', d: '#00ffff', n: '#ffffff' };

draw('kline', [
  ...[113, 172, 232, 291, 351, 411].map(y => level(y, '#8c0808')),
  ...candles.map(([h, t, b, l, k], i) => {
    const x = 65 + 4 * i, c = colors[k];
    if (k === 'u') {
      return `<path d="M${x + .5} ${h}V${t}M${x + .5} ${b}V${l}" stroke="${c}"/><rect x="${x - .5}" y="${+t + .5}" width="2" height="${Math.max(b - t - 1, 1)}" fill="#000" stroke="${c}"/>`;
    }
    return `<path d="M${x + .5} ${h}V${l}" stroke="${c}"/><rect x="${x - 1}" y="${t}" width="3" height="${Math.max(b - t, 1)}" fill="${c}"/>`;
  }),
  line(upper, '#f4f400'), line(mid, '#f0f0f0'), line(lower, '#f000f0'),
  line('501,446 788,279', '#d0d0d0'),
  line('394,131 404,131', '#aaa'), line('402,129 404,131 402,133', '#aaa'),
  line('702,420 712,420', '#aaa'), line('710,418 712,420 710,422', '#aaa'),
]);

draw('rsi', [level(476), level(506), level(536), line(rsi, '#ff0000', 2), line(ma1, '#f0f0f0'), line(ma2, '#f4f400')]);

draw('macd', [
  level(603),
  ...hist.map((v, i) => `<path d="M${65.5 + 4 * i} 603.5v${-v}" stroke="${v > 0 ? '#e83838' : '#30e8e8'}"/>`),
  line(diff, '#f0f0f0'), line(dea, '#f4f400'),
]);

const bandBars = [];
for (let x = 65, k = 0; x <= 734; x += 4) {
  while (x > band[k + 1][0]) k++;
  const [x0, t0, b0] = band[k], [x1, t1, b1] = band[k + 1];
  const f = (x - x0) / (x1 - x0);
  const top = Math.round(t0 + (t1 - t0) * f), bottom = Math.round(b0 + (b1 - b0) * f);
  const blue = (x > 66 && x < 88) || (x > 163 && x < 361) || (x > 632 && x < 708);
  bandBars.push(`<rect x="${x - 1}" y="${top}" width="3" height="${Math.max(bottom - top, 1)}" fill="${blue ? '#0000ff' : '#a00808'}"/>`);
}
draw('bind', [level(690, '#0000ff', 734, 'none'), level(698, '#8c0808'), level(706, '#00ff00', 734, 'none'), level(721, '#ff00ff', 734, 'none'), ...bandBars]);
```
